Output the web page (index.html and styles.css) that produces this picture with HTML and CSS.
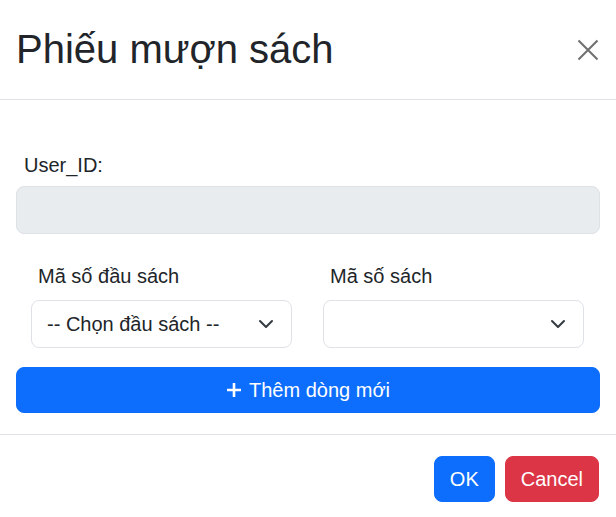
FILE: index.html
```html
<!DOCTYPE html>
<html lang="vi">
<head>
<meta charset="utf-8">
<title>Phiếu mượn sách</title>
<link rel="stylesheet" href="styles.css">
</head>
<body>
<div class="modal">
  <div class="modal-header">
    <h2 class="modal-title">Phiếu mượn sách</h2>
    <button class="btn-close" type="button" aria-label="Close">
      <svg width="22" height="22" viewBox="0 0 22 22"><path d="M1.5 1.5l19 19M20.5 1.5l-19 19" stroke="#707070" stroke-width="2.1" fill="none"/></svg>
    </button>
  </div>
  <div class="modal-body">
    <label class="user-label">User_ID:</label>
    <input class="form-control readonly" type="text" readonly>
    <div class="book-row">
      <div class="book-col">
        <label class="col-label">Mã số đầu sách</label>
        <select class="form-select"><option>-- Chọn đầu sách --</option></select>
      </div>
      <div class="book-col">
        <label class="col-label">Mã số sách</label>
        <select class="form-select"><option></option></select>
      </div>
    </div>
    <button class="btn btn-primary btn-block" type="button">
      <svg class="plus" width="16" height="16" viewBox="0 0 16 16"><path d="M8 1v14M1 8h14" stroke="#fff" stroke-width="2.6" fill="none"/></svg>
      <span>Thêm dòng mới</span>
    </button>
  </div>
  <div class="modal-footer">
    <button class="btn btn-primary" type="button">OK</button>
    <button class="btn btn-danger" type="button">Cancel</button>
  </div>
</div>
</body>
</html>
```
FILE: styles.css
```css
* { box-sizing: border-box; }
html, body { margin: 0; padding: 0; background: #fff; }
body {
  font-family: "Liberation Sans", Arial, sans-serif;
  color: #212529;
  font-size: 20px;
  line-height: 1.5;
}
.modal {
  width: 616px;
  background: #fff;
}
.modal-header {
  display: flex;
  align-items: center;
  justify-content: space-between;
  height: 100px;
  padding: 0 17px 0 16px;
  border-bottom: 1px solid #dee2e6;
}
.modal-title {
  margin: 0;
  font-size: 40px;
  font-weight: 400;
  line-height: 48px;
  padding-bottom: 1px;
}
.btn-close {
  border: 0;
  background: transparent;
  padding: 0;
  width: 22px;
  height: 22px;
  display: flex;
}
.modal-body {
  padding: 50px 16px 21px;
  display: flex;
  flex-direction: column;
}
.user-label {
  display: block;
  padding-left: 8px;
  line-height: 30px;
  margin-bottom: 6px;
}
.form-control, .form-select {
  display: block;
  width: 100%;
  height: 48px;
  font-family: inherit;
  font-size: 20px;
  color: #212529;
  border: 1px solid #dee2e6;
  border-radius: 8px;
  padding: 0 15px;
  outline: none;
}
.readonly { background: #e9ecef; }
.book-row {
  display: grid;
  grid-template-columns: 1fr 1fr;
  column-gap: 31px;
  padding: 0 16px 0 15px;
  margin-top: 27px;
}
.book-col { display: flex; flex-direction: column; }
.col-label {
  padding-left: 7px;
  line-height: 30px;
  margin-bottom: 9px;
}
.form-select {
  appearance: none;
  -webkit-appearance: none;
  background-color: #fff;
  background-image: url("data:image/svg+xml,%3csvg xmlns='http://www.w3.org/2000/svg' viewBox='0 0 16 16'%3e%3cpath fill='none' stroke='%23343a40' stroke-linecap='round' stroke-linejoin='round' stroke-width='2' d='M2 5l6 6 6-6'/%3e%3c/svg%3e");
  background-repeat: no-repeat;
  background-position: right 17px center;
  background-size: 16px 16px;
  padding-right: 48px;
}
.btn {
  font-family: inherit;
  font-size: 20px;
  line-height: 30px;
  padding: 7px 15px;
  border: 1px solid transparent;
  border-radius: 8px;
  color: #fff;
  cursor: pointer;
}
.btn-primary { background: #0d6efd; border-color: #0d6efd; }
.btn-danger { background: #dc3545; border-color: #dc3545; }
.btn-block {
  margin-top: 19px;
  width: 100%;
  display: flex;
  align-items: center;
  justify-content: center;
  gap: 7px;
}
.plus { display: block; }
.modal-footer {
  display: flex;
  justify-content: flex-end;
  gap: 10px;
  padding: 21px 17px 15px;
  border-top: 1px solid #dee2e6;
}
```
